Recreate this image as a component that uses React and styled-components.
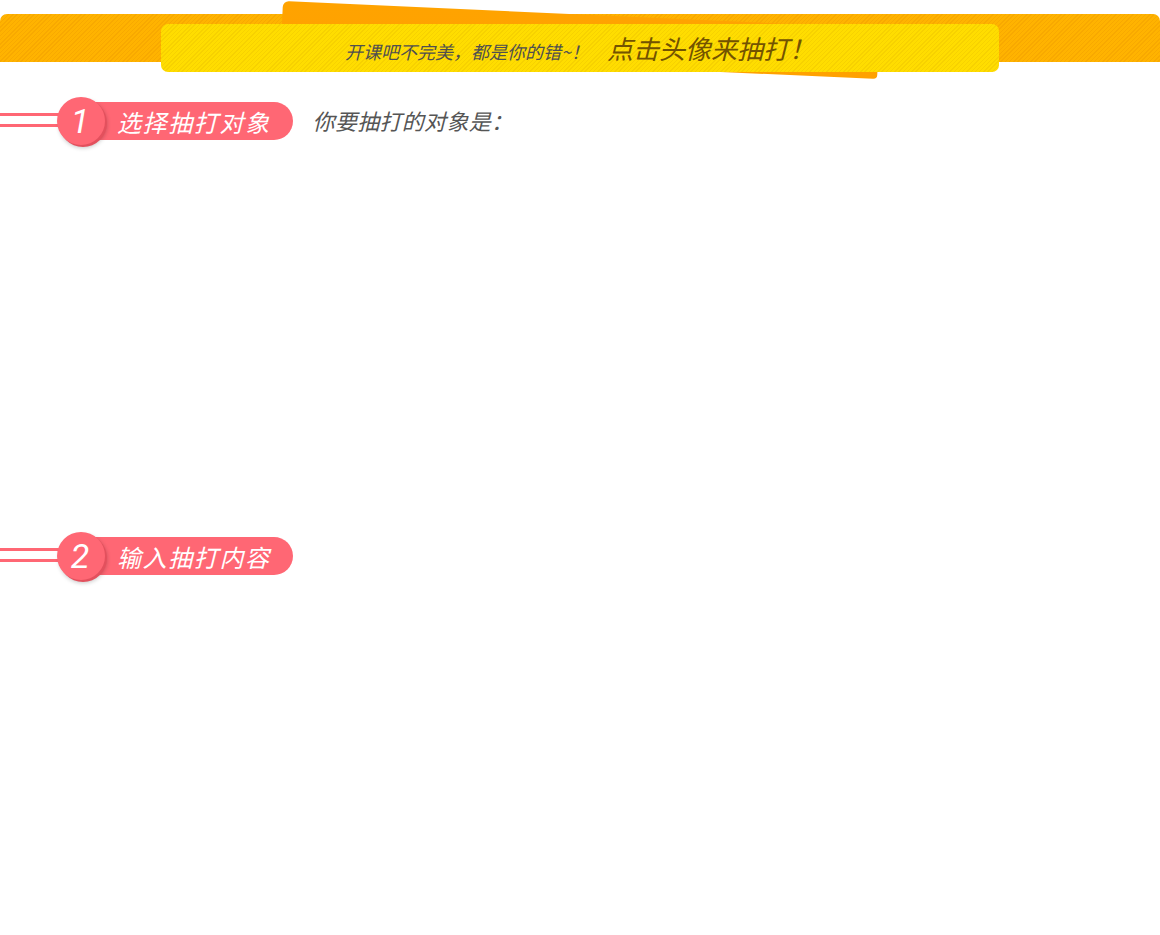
import React from "react";
import styled, { createGlobalStyle } from "styled-components";

const Global = createGlobalStyle`
  html, body { margin: 0; padding: 0; background: #fff; }
  body { font-family: "Noto Sans CJK SC", "Noto Sans", sans-serif; }
  * { box-sizing: border-box; }
`;

const Page = styled.div`
  width: 1160px;
  min-height: 935px;
  background: #fff;
`;

const Header = styled.header`
  position: relative;
  padding-top: 14px;
  height: 80px;
`;

const OrangeBar = styled.div`
  height: 48px;
  border-radius: 7px 7px 0 0;
  background-color: #ffb300;
  background-image: repeating-linear-gradient(
    135deg,
    rgba(235, 150, 0, 0.35) 0 1px,
    transparent 1px 3px
  );
  padding: 10px 161px 0 161px;
`;

const Paper = styled.div`
  position: absolute;
  left: 283px;
  top: 1px;
  width: 597px;
  height: 51px;
  background: linear-gradient(180deg, #ffa300 0%, #ffa100 100%);
  border-radius: 6px 3px 4px 3px;
  transform-origin: 0 0;
  transform: rotate(2.6deg);
  z-index: 1;
`;

const Banner = styled.div`
  position: relative;
  z-index: 2;
  height: 48px;
  border-radius: 7px;
  background-color: #ffdd00;
  background-image: repeating-linear-gradient(
    135deg,
    rgba(240, 200, 0, 0.55) 0 1px,
    transparent 1px 3px
  );
  display: flex;
  align-items: center;
  justify-content: center;
  gap: 18px;
  font-style: italic;
`;

const BannerSmall = styled.span`
  font-size: 18px;
  color: #4f4f4f;
  margin-top: 5px;
`;

const BannerBig = styled.span`
  font-size: 26px;
  color: #735300;
  margin-top: -2px;
`;

const Section = styled.section`
  height: ${(p) => p.$height}px;
`;

const TitleRow = styled.div`
  display: flex;
  align-items: center;
  height: 50px;
`;

const Lines = styled.div`
  width: 60px;
  height: 14px;
  margin-top: -3px;
  border-top: 3px solid #ff6774;
  border-bottom: 3px solid #ff6774;
  margin-right: -3px;
`;

const Circle = styled.div`
  position: relative;
  z-index: 2;
  width: 48px;
  height: 48px;
  border-radius: 50%;
  background: #ff6774;
  box-shadow: 2px 2px 0 #e3505d, 2px 3px 4px rgba(0, 0, 0, 0.22);
  display: flex;
  align-items: center;
  justify-content: center;
  color: #fff;
  font-family: Roboto, "Open Sans", sans-serif;
  font-weight: 400;
  font-style: italic;
  font-size: 34px;
  line-height: 1;
  padding-right: 2px;
`;

const Pill = styled.div`
  position: relative;
  z-index: 1;
  margin-left: -10px;
  height: 38px;
  padding: 0 22px 0 22px;
  border-radius: 0 19px 19px 0;
  background: #ff6774;
  display: flex;
  align-items: center;
  color: #fff;
  font-size: 24px;
  font-style: italic;
  letter-spacing: 1.6px;
`;

const Hint = styled.span`
  margin-left: 20px;
  margin-top: -2px;
  font-size: 22px;
  font-style: italic;
  color: #555;
  letter-spacing: 0.3px;
`;

function Title({ num, label, hint }) {
  return (
    <TitleRow>
      <Lines />
      <Circle>{num}</Circle>
      <Pill>{label}</Pill>
      {hint && <Hint>{hint}</Hint>}
    </TitleRow>
  );
}

export default function App() {
  return (
    <Page>
      <Global />
      <Header>
        <Paper />
        <OrangeBar>
          <Banner>
            <BannerSmall>开课吧不完美，都是你的错~！</BannerSmall>
            <BannerBig>点击头像来抽打！</BannerBig>
          </Banner>
        </OrangeBar>
      </Header>
      <div style={{ height: 16 }} />
      <Section $height={435}>
        <Title num="1" label="选择抽打对象" hint="你要抽打的对象是：" />
      </Section>
      <Section $height={300}>
        <Title num="2" label="输入抽打内容" />
      </Section>
    </Page>
  );
}
